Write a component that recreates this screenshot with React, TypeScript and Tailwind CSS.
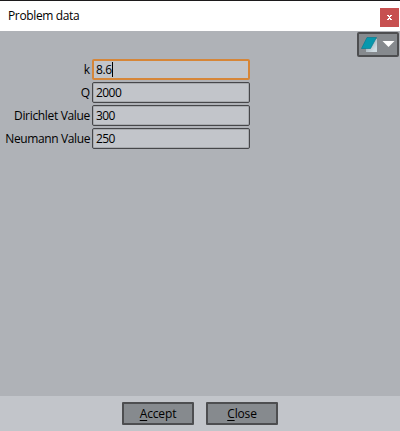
import React from 'react';

const fields = [
  { label: 'k', value: '8.6', active: true, ls: 'tracking-normal' },
  { label: 'Q', value: '2000', active: false, ls: 'tracking-normal' },
  { label: 'Dirichlet Value', value: '300', active: false, ls: 'tracking-[-0.33px]' },
  { label: 'Neumann Value', value: '250', active: false, ls: 'tracking-[-0.38px]' },
];

function Field({ label, value, active, ls }: (typeof fields)[number]) {
  return (
    <label className="flex h-[21px] items-center">
      <span className={`w-[90px] shrink-0 whitespace-nowrap text-right leading-[21px] ${ls}`}>{label}</span>
      <span
        className={`ml-[2px] flex h-[21px] w-[158px] items-center rounded-[2px] bg-[#c2c5ca] ${
          active ? 'border-2 border-[#d68638] pl-[2px]' : 'border border-[#46474a] pl-[3px] shadow-[inset_0_0_0_1px_#a8abaf]'
        }`}
      >
        <span className={active ? 'tracking-[-0.35px]' : 'tracking-[-0.55px]'}>{value}</span>
        {active && <span className="h-[15px] w-px bg-black" />}
      </span>
    </label>
  );
}

function DialogButton({ hot, rest }: { hot: string; rest: string }) {
  return (
    <button className="h-[23px] w-[72px] rounded-[1px] border-2 border-[#4d4e50] bg-[#868a8e] leading-[19px] tracking-[-0.15px]">
      <span className="underline underline-offset-2">{hot}</span>
      {rest}
    </button>
  );
}

export default function App() {
  return (
    <div className="flex h-[431px] w-[400px] flex-col overflow-hidden bg-[#afb2b7] font-['Open_Sans','Noto_Sans',sans-serif] text-[12px] text-black">
      <header className="flex h-[31px] items-start justify-between border-t border-[#1c1a1c] bg-white pl-2 pr-px">
        <h1 className="leading-[30px] tracking-[-0.36px]">Problem data</h1>
        <button className="mt-[7px] flex h-[19px] w-[19px] items-center justify-center bg-[#c75050]" aria-label="Close window">
          <svg width="5" height="5" viewBox="0 0 5 5" fill="white" shapeRendering="crispEdges">
            <path d="M0 0H2V1H3V0H5V1H4V2H3V3H4V4H5V5H3V4H2V5H0V4H1V3H2V2H1V1H0Z" />
          </svg>
        </button>
      </header>
      <main className="flex h-[365px] flex-col">
        <div className="flex h-[28px] justify-end pr-px pt-px">
          <button className="flex h-[25px] w-[42px] items-center rounded-[2px] border-2 border-[#4d4e50] bg-[#868a8e]" aria-label="Options">
            <svg width="38" height="21" viewBox="0 0 38 21">
              <defs>
                <linearGradient id="page" x1="0" y1="0" x2="1" y2="1">
                  <stop offset="0.2" stopColor="#9aa8b0" />
                  <stop offset="0.8" stopColor="#d0dce2" />
                </linearGradient>
              </defs>
              <path d="M7 5H18V18H7Z" fill="url(#page)" />
              <path d="M8 3.5H17.5L11.5 14.5H2.5Z" fill="#0798ad" stroke="#087c91" strokeWidth=".7" />
              <path d="M23.5 7H35.5L29.5 13Z" fill="white" />
            </svg>
          </button>
        </div>
        <div className="flex flex-col gap-[2px]">
          {fields.map((f) => (
            <Field key={f.label} {...f} />
          ))}
        </div>
      </main>
      <footer className="flex h-[35px] items-start justify-center gap-3 bg-[#c2c5ca] pt-[6px]">
        <DialogButton hot="A" rest="ccept" />
        <DialogButton hot="C" rest="lose" />
      </footer>
    </div>
  );
}
